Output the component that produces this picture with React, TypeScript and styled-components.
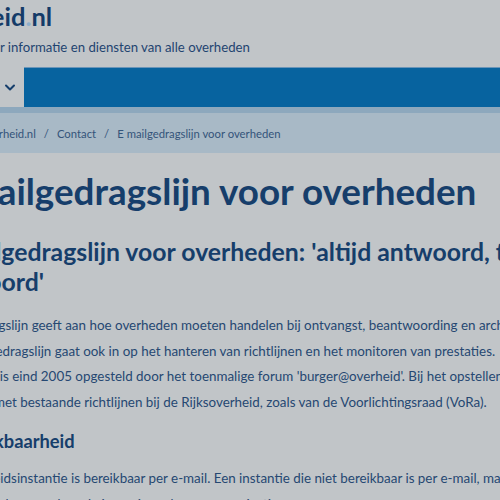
import React from 'react'
import styled, { createGlobalStyle } from 'styled-components'

const GlobalStyle = createGlobalStyle`
  html, body {
    margin: 0;
    padding: 0;
    background: #c1c5c8;
    overflow: hidden;
  }
  body {
    font-family: Lato, "Open Sans", sans-serif;
    color: #163e6b;
  }
`

// the page is scrolled sideways: its left part lies outside the window
const Page = styled.div`
  width: 1100px;
  margin-left: -68px;
`

const Header = styled.header`
  display: flex;
  flex-direction: column;
`

const Logo = styled.div`
  margin-left: -6px;
  font-size: 25.5px;
  font-weight: 700;
  line-height: 32px;
  color: #143b68;
  span {
    color: #8fb0cc;
  }
`

const Tagline = styled.div`
  margin-top: 5px;
  font-size: 13.2px;
  line-height: 20px;
  color: #1f4470;
`

const Nav = styled.nav`
  margin-top: 10px;
  height: 40px;
  display: flex;
  background: #07639f;
  box-shadow: inset 0 1px 0 #6b95b8;
`

const NavTab = styled.button`
  display: flex;
  align-items: center;
  gap: 12px;
  height: 40px;
  padding: 0 8px 0 27px;
  border: none;
  background: #c1c5c8;
  color: #163e6b;
  font-family: inherit;
  font-size: 13px;
`

const Strip = styled.div`
  height: 6px;
  background: #8da8bd;
`

const Crumbs = styled.div`
  height: 40px;
  display: flex;
  align-items: center;
  padding-left: 11px;
  background: #a8b9c6;
  font-size: 11.3px;
  color: #34547a;
`

const Sep = styled.span`
  margin: 0 8px;
`

const Main = styled.main`
  width: 760px;
  padding-top: 16px;
`

const Title = styled.h1`
  margin: 0;
  font-size: 36.8px;
  line-height: 44px;
  font-weight: 700;
  color: #163e6b;
`

const SubTitle = styled.h2`
  margin: 24px 0 0;
  max-width: 660px;
  font-size: 24.8px;
  line-height: 30px;
  font-weight: 700;
  color: #163e6b;
`

const Text = styled.p`
  margin: 16px 0 0;
  font-size: 13.4px;
  line-height: 25.5px;
  color: #264872;
`

const Section = styled.h3`
  margin: 13px 0 0;
  font-size: 18.3px;
  line-height: 26px;
  font-weight: 700;
  color: #163e6b;
`

const SectionText = styled(Text)`
  margin-top: 12px;
`

const Chevron = () => (
  <svg width="12" height="12" viewBox="0 0 12 12" fill="none">
    <path d="M2 4.5 L6 8.5 L10 4.5" stroke="#163e6b" strokeWidth="2" strokeLinecap="round" strokeLinejoin="round" />
  </svg>
)

const HomeIcon = () => (
  <svg width="14" height="14" viewBox="0 0 14 14" fill="#34547a">
    <path d="M7 1 L13 6.5 H11 V13 H8.5 V9 H5.5 V13 H3 V6.5 H1 Z" />
  </svg>
)

const App: React.FC = () => {
  return (
    <Page>
      <GlobalStyle />
      <Header>
        <Logo>
          overheid<span>.</span>nl
        </Logo>
        <Tagline>De weg naar informatie en diensten van alle overheden</Tagline>
      </Header>
      <Nav>
        <NavTab>
          Menu
          <Chevron />
        </NavTab>
      </Nav>
      <Strip />
      <Crumbs>
        <HomeIcon />
        <Sep>/</Sep>
        <span>Overheid.nl</span>
        <Sep>/</Sep>
        <span>Contact</span>
        <Sep>/</Sep>
        <span>E mailgedragslijn voor overheden</span>
      </Crumbs>
      <Main>
        <Title>E-mailgedragslijn voor overheden</Title>
        <SubTitle>E-mailgedragslijn voor overheden: 'altijd antwoord, tijdig antwoord'</SubTitle>
        <Text>
          Deze gedragslijn geeft aan hoe overheden moeten handelen bij ontvangst, beantwoording en archivering van e-mail.
          <br />
          De e-mailgedragslijn gaat ook in op het hanteren van richtlijnen en het monitoren van prestaties.
          <br />
          De richtlijn is eind 2005 opgesteld door het toenmalige forum 'burger@overheid'. Bij het opstellen is rekening
          <br />
          gehouden met bestaande richtlijnen bij de Rijksoverheid, zoals van de Voorlichtingsraad (VoRa).
        </Text>
        <Section>1. Bereikbaarheid</Section>
        <SectionText>
          Elke overheidsinstantie is bereikbaar per e-mail. Een instantie die niet bereikbaar is per e-mail, maakt dit
          <br />
          duidelijk kenbaar op de website en in andere communicatie.
        </SectionText>
      </Main>
    </Page>
  )
}

export default App
